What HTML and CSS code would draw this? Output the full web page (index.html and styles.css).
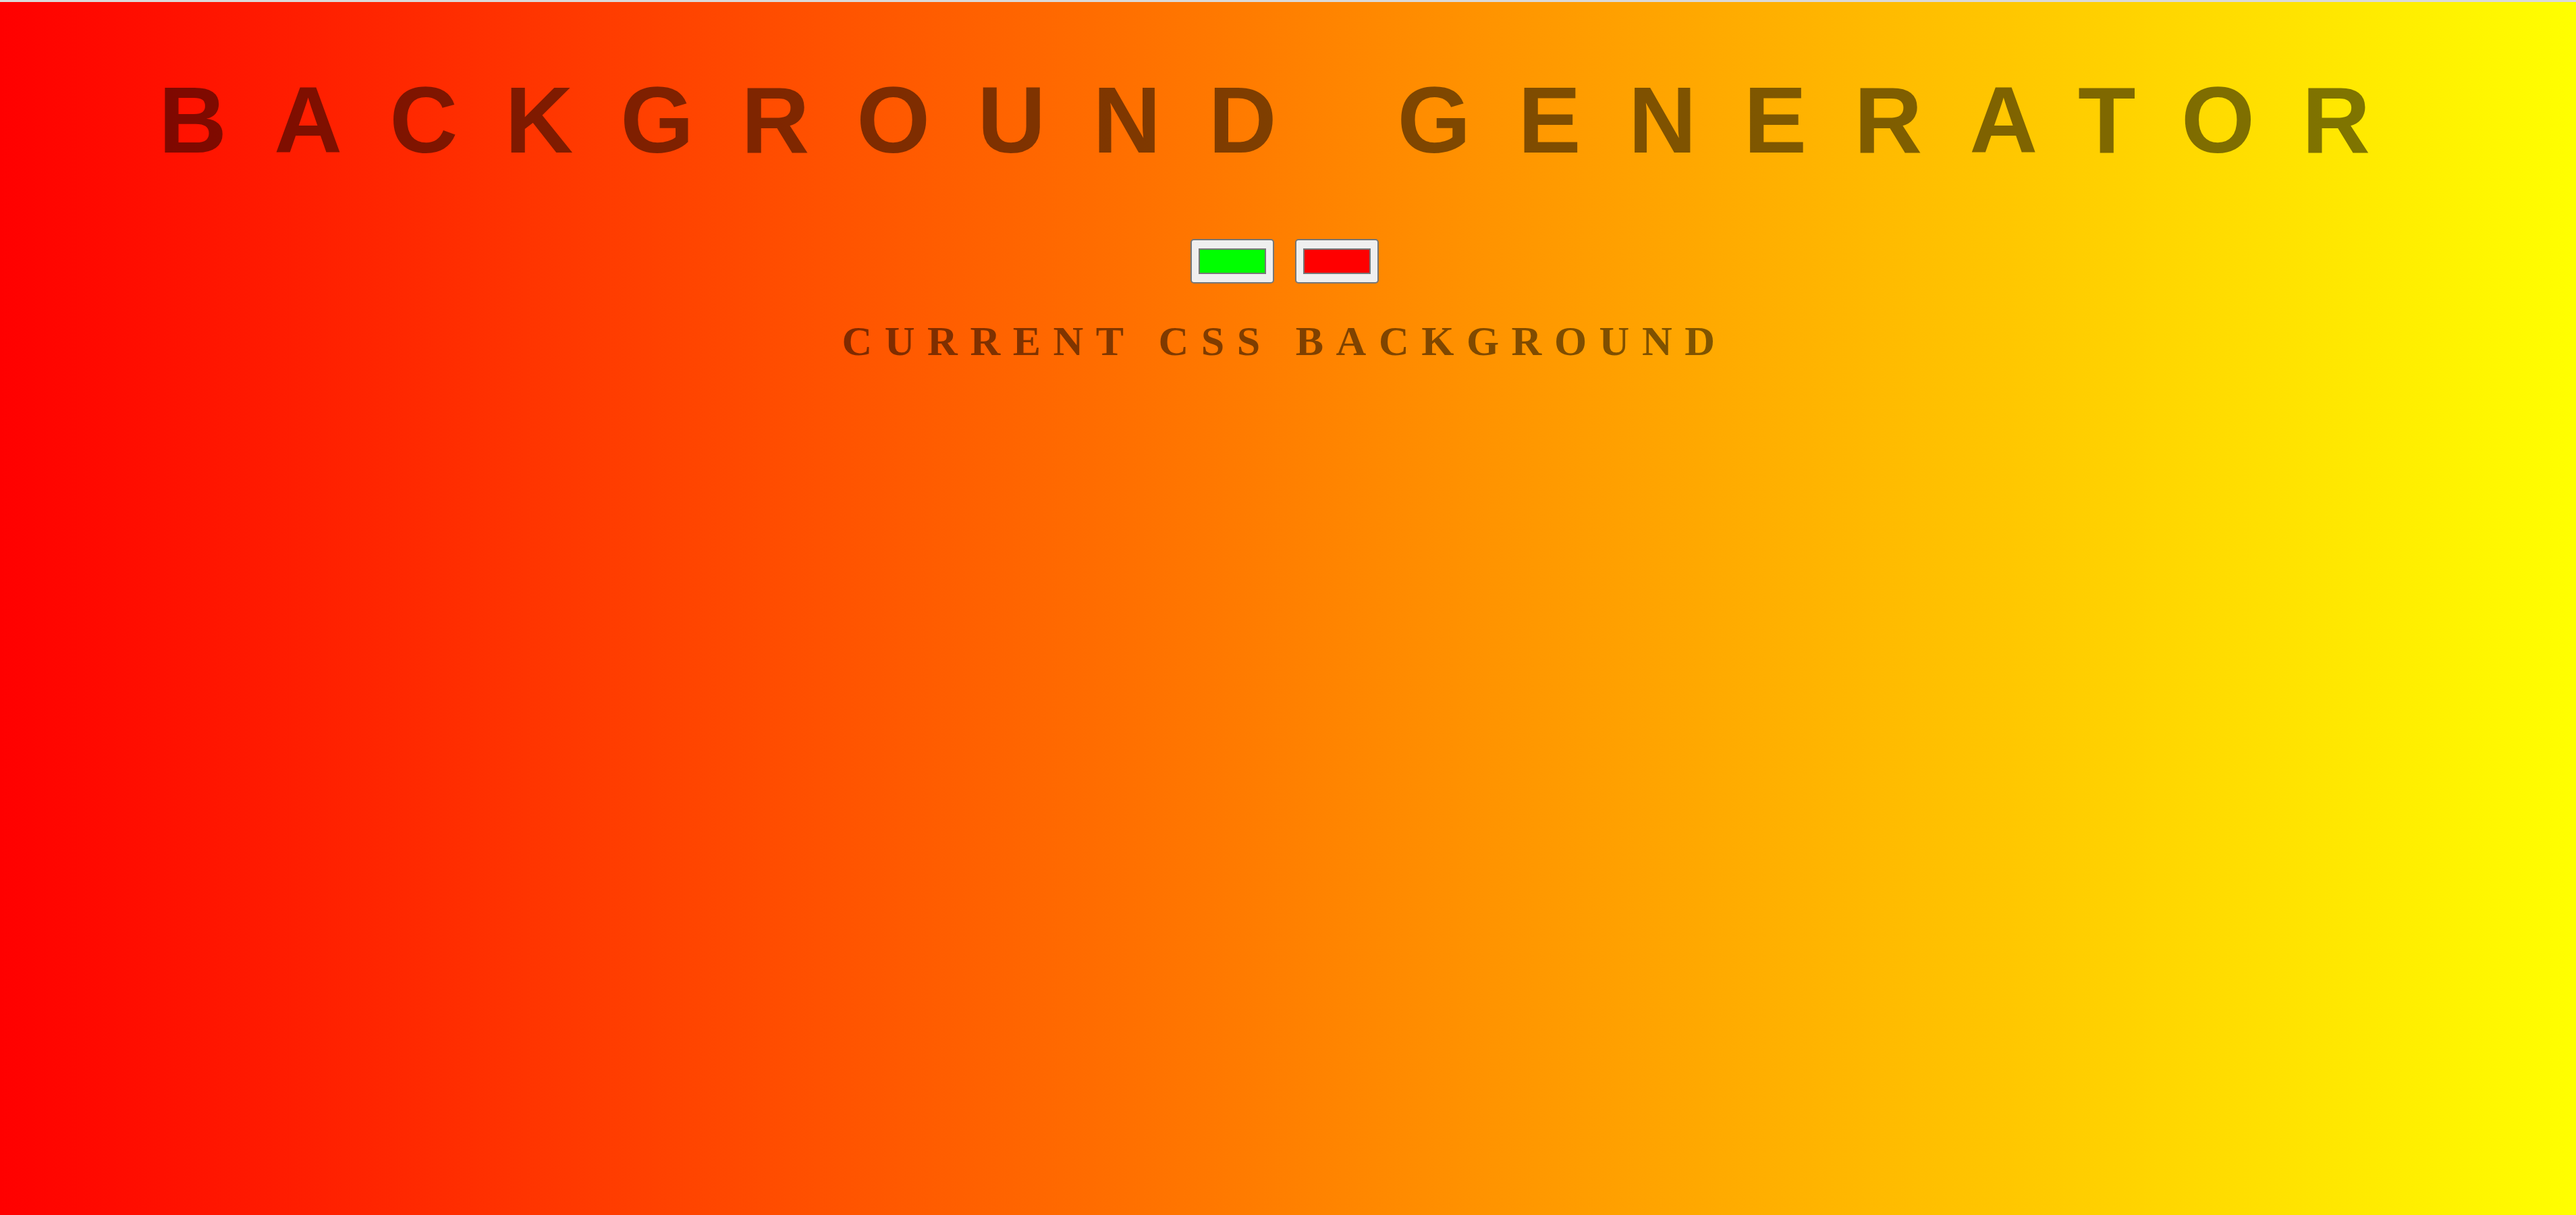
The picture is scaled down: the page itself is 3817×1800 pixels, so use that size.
FILE: index.html
```html
<!DOCTYPE html>
<html lang="en">
<head>
<meta charset="utf-8">
<title>Background Generator</title>
<link rel="stylesheet" href="styles.css">
</head>
<body class="page">
  <main class="generator">
    <h1 class="title">Background Generator</h1>
    <div class="pickers">
      <input class="picker" type="color" name="color1" value="#00ff00">
      <input class="picker" type="color" name="color2" value="#ff0000">
    </div>
    <h3 class="current">Current CSS Background</h3>
  </main>
</body>
</html>
```

FILE: styles.css
```css
html {
  margin: 0;
  padding: 0;
}

.page {
  margin: 0;
  min-height: 1797px;
  border-top: 3px solid #dadada;
  background: linear-gradient(to right, #ff0000, #ffff00);
  color: rgba(0, 0, 0, 0.5);
  text-align: center;
  text-transform: uppercase;
}

.generator {
  display: flex;
  flex-direction: column;
  align-items: center;
}

.title {
  margin: 105px 0 0 0;
  font-family: "Liberation Sans", Arial, sans-serif;
  font-weight: 700;
  font-size: 140px;
  line-height: 140px;
  letter-spacing: 0.5em;
  white-space: nowrap;
}

.pickers {
  display: flex;
  gap: 31px;
  margin-top: 106px;
  padding-right: 10px;
}

.picker {
  -webkit-appearance: none;
  appearance: none;
  box-sizing: border-box;
  width: 124px;
  height: 66px;
  margin: 0;
  padding: 2px 5px;
  border: 2px solid #767676;
  border-radius: 5px;
  background: #efefef;
  cursor: pointer;
}

.picker::-webkit-color-swatch-wrapper {
  padding: 10px 5px;
}

.picker::-webkit-color-swatch {
  border: 2px solid #777777;
  border-radius: 0;
}

.current {
  margin: 54px 0 0 0;
  padding-right: 10px;
  font-family: "Liberation Serif", "Times New Roman", serif;
  font-weight: 700;
  font-size: 62px;
  line-height: 62px;
  letter-spacing: 18.5px;
  white-space: nowrap;
}
```
